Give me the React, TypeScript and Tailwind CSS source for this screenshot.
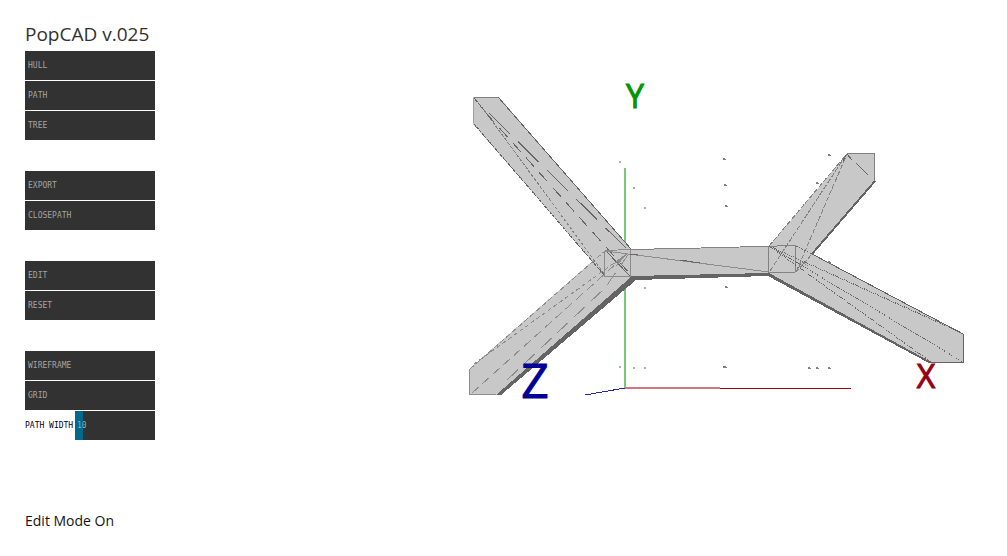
import { useState } from 'react';

const groups = [
  ['HULL', 'PATH', 'TREE'],
  ['EXPORT', 'CLOSEPATH'],
  ['EDIT', 'RESET'],
  ['WIREFRAME', 'GRID'],
];

function ToolButton({ label }: { label: string }) {
  return (
    <button
      type="button"
      className="flex h-[29px] w-full items-center bg-[#323232] pt-px pl-[3px] text-left text-[#a4a4a4] hover:bg-[#444444]"
    >
      {label}
    </button>
  );
}

function PathWidthSlider() {
  const [value, setValue] = useState(10);
  return (
    <div className="flex h-[29px] w-full items-center">
      <label htmlFor="path-width" className="w-[50px] shrink-0 pt-px whitespace-nowrap text-[#000020]">
        PATH WIDTH
      </label>
      <div className="relative h-full min-w-0 flex-1">
        <input
          id="path-width"
          type="range"
          min={0}
          max={100}
          value={value}
          onChange={(e) => setValue(Number(e.target.value))}
          className="block h-full w-full cursor-pointer appearance-none bg-[#323232] [&::-webkit-slider-thumb]:appearance-none"
          style={{
            backgroundImage: `linear-gradient(to right, #00698c ${value}%, #323232 ${value}%)`,
          }}
        />
        <output
          htmlFor="path-width"
          className="pointer-events-none absolute inset-y-0 left-0.5 flex items-center pt-px text-[#80b4c5]"
        >
          {value}
        </output>
      </div>
    </div>
  );
}

const dots = [
  [620, 162], [634, 188], [645, 208], [645, 288], [620, 367], [634, 368], [645, 368],
];

const markers = [
  [724, 159], [725, 185], [726, 206], [726, 287], [724, 367], [725, 367], [829, 155],
  [817, 183], [829, 262], [809, 368], [817, 368], [829, 368],
];

function Scene() {
  return (
    <svg
      viewBox="455 75 520 350"
      className="w-[520px] shrink-0"
      role="img"
      aria-label="Model view"
      shapeRendering="crispEdges"
    >
      <path d="M625 168V388" stroke="#78c878" strokeWidth="2" />
      <path d="M625 388H720" stroke="#d07880" strokeWidth="2" />
      <path d="M720 388.5H851" stroke="#960014" />
      <path d="M625 388L585 395" stroke="#2828a8" />

      <g fill="#b0b0b0">
        {dots.map(([x, y]) => (
          <rect key={`${x}-${y}`} x={x - 1} y={y - 1} width="2" height="2" />
        ))}
      </g>
      <g fill="#808080">
        {markers.map(([x, y]) => (
          <path key={`${x}-${y}`} d={`M${x - 1} ${y - 1}h2v1h1v1h-3z`} />
        ))}
      </g>

      <g fill="#646464">
        <path d="M631 275L495 395H501L636 280L768 276L927 362H935L769 272Z" />
      </g>
      <g fill="#c8c8c8">
        <path d="M473 97H499L631 249V277H605V276L473 124Z" />
        <path d="M605 250L631 249V277L496 395H469V369Z" />
        <path d="M630 250L769 246H796V272L769 273L631 276Z" />
        <path d="M769 246L847 154L875 153V181L812 254L796 273Z" />
        <path d="M769 246L796 245L963 334V362H931L769 273Z" />
      </g>

      <g fill="none" stroke="#646464">
        <path d="M498 97L631 249" />
        <path d="M474 97.500H498" stroke="#828282" />
        <path d="M473.500 98V123" stroke="#a0a0a0" />
        <path d="M474 124L605 276" strokeDasharray="3 1" />
        <path d="M474 98L484 110" strokeDasharray="5 1" />
        <path d="M484 110L605 275" strokeDasharray="3 2" stroke="#808080" />
        <path d="M486 113L631 275" strokeDasharray="12 8" />
        <path d="M489 113L630 252" strokeDasharray="29 12" />
        <path d="M605 250L631 277" />
      </g>

      <g fill="none" stroke="#8c8c8c">
        <path d="M469.500 369V394.500H496" />
        <path d="M470 369L605 251" strokeDasharray="5 3" />
        <path d="M474 364L628 253" strokeDasharray="4 3" />
        <path d="M472 393L628 253" strokeDasharray="9 5" />
        <path d="M507 380L605 288L630 252" strokeDasharray="15 8" />
        <path d="M604.500 251V276.500H630.500V249.500L605 250.500" />
        <path d="M605 251L769 272" />
        <path d="M680 260L700 263M630 254L638 255" stroke="#646464" />
        <path d="M614 264L628 253M616 266L623 258" />
      </g>

      <g fill="none" stroke="#828282">
        <path d="M631 249.500L701 248L740 247L796 245.500" />
        <path d="M768.500 246V272.500L796 272" />
        <path d="M795.500 246V272" />
        <path d="M769 246L846 155" strokeDasharray="5 2" />
        <path d="M770 271L846 155" strokeDasharray="5 2" />
        <path d="M796 272L847 154" strokeDasharray="5 2" />
        <path d="M847 154L875 153.500" />
        <path d="M874.500 154V181" />
        <path d="M796 272L812 254" strokeDasharray="4 2" />
        <path d="M796 272L802 262L808 266" strokeDasharray="4 2" />
      </g>
      <g fill="none" stroke="#646464">
        <path d="M847 154L852 160M856 163L868 175M846 155L843 161" />
        <path d="M875 181L812 254" strokeWidth="2" />
        <path d="M796 246L812 254" strokeDasharray="2 1" />
        <path d="M812 254L963 334" />
        <path d="M963.500 334V362.500H928" />
        <path d="M769 246L960 332" strokeDasharray="1 1" />
        <path d="M769 246L963 362" strokeDasharray="1 1" />
        <path d="M769 246L931 362" strokeDasharray="1 1" />
      </g>

      <g className="font-['Open_Sans',sans-serif]" strokeWidth="1">
        <text x="635" y="108" textAnchor="middle" fontSize="32" fill="#009600" stroke="#009600">Y</text>
        <text x="535" y="398" textAnchor="middle" fontSize="48" fill="#000096" stroke="#000096">Z</text>
        <text x="926" y="388" textAnchor="middle" fontSize="32" fill="#960014" stroke="#960014">X</text>
      </g>
    </svg>
  );
}

export default function App() {
  return (
    <div className="flex min-h-screen bg-white font-['Open_Sans',sans-serif]">
      <aside className="flex shrink-0 flex-col pt-[23px] pb-6 pl-[25px]">
        <h1 className="h-7 text-[19px] leading-[22px] whitespace-nowrap text-[#323232]">PopCAD v.025</h1>
        <div className="flex w-[130px] flex-col gap-[31px] font-['DejaVu_Sans_Mono',monospace] text-[8px] leading-[10px]">
          {groups.map((labels, index) => (
            <div key={labels[0]} className="flex flex-col gap-px">
              {labels.map((label) => (
                <ToolButton key={label} label={label} />
              ))}
              {index === groups.length - 1 && <PathWidthSlider />}
            </div>
          ))}
        </div>
        <p className="mt-auto text-[14px] leading-[22px] text-[#141414]">Edit Mode On</p>
      </aside>
      <main className="flex min-w-0 flex-1 items-start justify-end pt-[75px] pr-8">
        <Scene />
      </main>
    </div>
  );
}
